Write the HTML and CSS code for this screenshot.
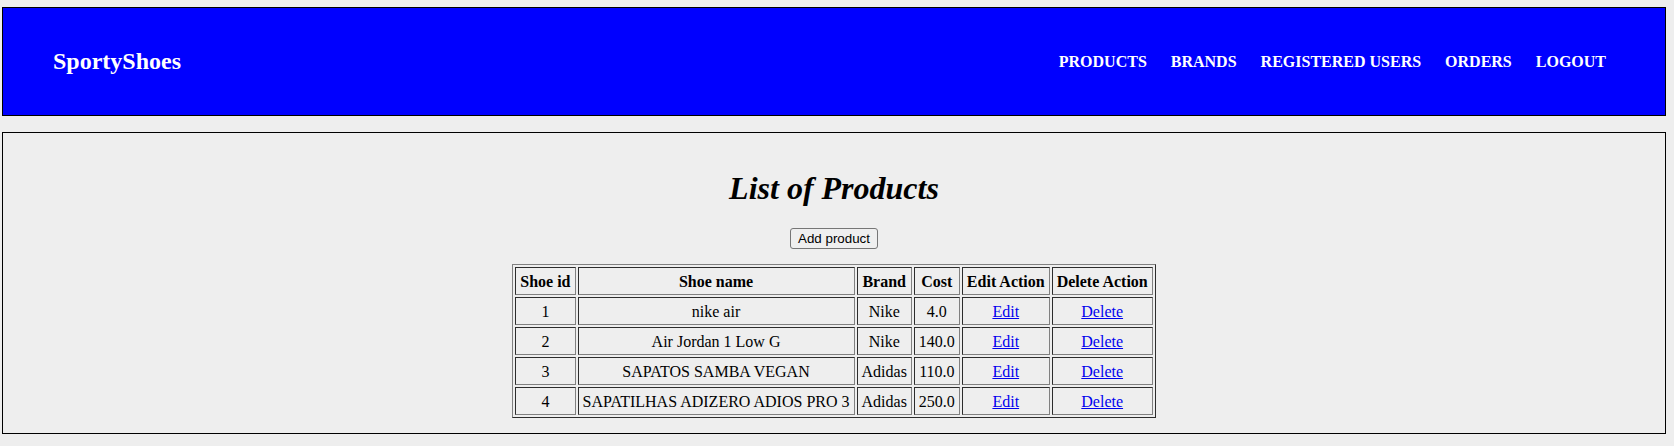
FILE: index.html
```html
<!DOCTYPE html>
<html lang="en">
<head>
    <meta charset="UTF-8">
    <title>SportyShoes - List of Products</title>
    <link rel="stylesheet" href="styles.css">
</head>
<body>
    <div class="header">
        <a href="#" class="logo">SportyShoes</a>
        <div class="nav">
            <a href="#">PRODUCTS</a>
            <a href="#">BRANDS</a>
            <a href="#">REGISTERED USERS</a>
            <a href="#">ORDERS</a>
            <a href="#">LOGOUT</a>
        </div>
    </div>

    <div class="content">
        <h1>List of Products</h1>
        <div class="actions">
            <button>Add product</button>
        </div>
        <table class="products">
            <tr>
                <th>Shoe id</th>
                <th>Shoe name</th>
                <th>Brand</th>
                <th>Cost</th>
                <th>Edit Action</th>
                <th>Delete Action</th>
            </tr>
            <tr>
                <td>1</td>
                <td>nike air</td>
                <td>Nike</td>
                <td>4.0</td>
                <td><a href="#">Edit</a></td>
                <td><a href="#">Delete</a></td>
            </tr>
            <tr>
                <td>2</td>
                <td>Air Jordan 1 Low G</td>
                <td>Nike</td>
                <td>140.0</td>
                <td><a href="#">Edit</a></td>
                <td><a href="#">Delete</a></td>
            </tr>
            <tr>
                <td>3</td>
                <td>SAPATOS SAMBA VEGAN</td>
                <td>Adidas</td>
                <td>110.0</td>
                <td><a href="#">Edit</a></td>
                <td><a href="#">Delete</a></td>
            </tr>
            <tr>
                <td>4</td>
                <td>SAPATILHAS ADIZERO ADIOS PRO 3</td>
                <td>Adidas</td>
                <td>250.0</td>
                <td><a href="#">Edit</a></td>
                <td><a href="#">Delete</a></td>
            </tr>
        </table>
    </div>
</body>
</html>
```

FILE: styles.css
```css
body {
    font-family: "Liberation Serif", "Times New Roman", serif;
    font-size: 16px;
    background: #eeeeee;
    color: black;
    margin: 7px 8px 0 2px;
}
.header {
    background: #0000ff;
    border: 1px solid black;
    height: 107px;
    padding: 0 59px 0 50px;
    display: flex;
    align-items: center;
    justify-content: space-between;
}
.logo {
    color: white;
    font-size: 24px;
    font-weight: bold;
    text-decoration: none;
}
.nav {
    display: flex;
    gap: 24px;
}
.nav a {
    color: white;
    font-weight: bold;
    text-decoration: none;
}
.content {
    margin-top: 16px;
    border: 1px solid black;
    background: #eeeeee;
    padding: 16px 0 15px;
    text-align: center;
}
.content h1 {
    font-size: 32px;
    font-style: italic;
    line-height: 37px;
    margin: 21px 0;
}
.actions button {
    font-family: "Liberation Sans", Arial, sans-serif;
    font-size: 13.33px;
    line-height: 15px;
    padding: 2px 7px;
    background: #efefef;
    color: black;
    border: 1px solid #767676;
    border-radius: 3px;
}
.products {
    margin: 15px auto 0;
    border: 1px outset grey;
    border-spacing: 2px;
}
.products th,
.products td {
    border: 1px inset grey;
    padding: 5px 4px 3px;
    line-height: 18px;
    text-align: center;
}
.products a {
    color: #0000ee;
}
```
